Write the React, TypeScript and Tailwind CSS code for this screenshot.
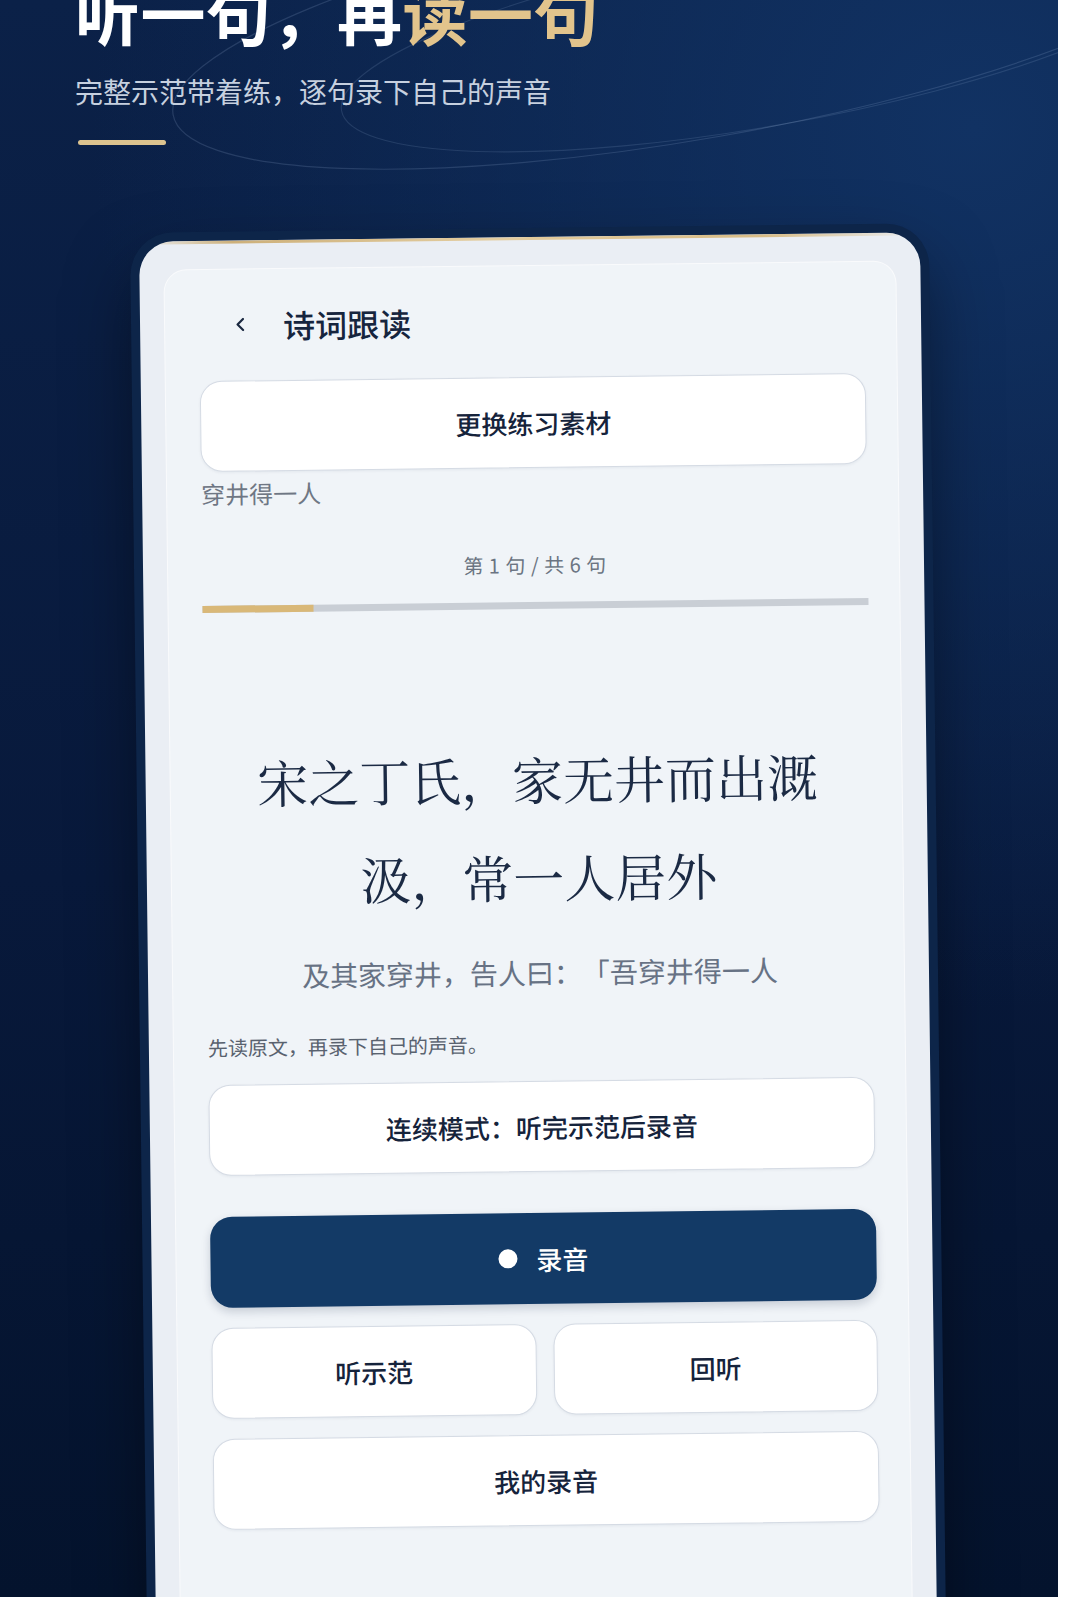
import React from 'react';
import clsx from 'clsx';

const sans = "font-['Noto_Sans_CJK_SC','Noto_Sans',sans-serif]";

const PanelButton: React.FC<{ children: React.ReactNode; className?: string }> = ({ children, className }) => (
  <button
    className={clsx(
      'flex h-[91px] w-full items-center justify-center rounded-[22px] border border-[#d5dbe4] bg-white text-[26px] font-medium text-[#15233b] shadow-[0_1px_3px_rgba(15,30,60,0.06)]',
      className,
    )}
  >
    {children}
  </button>
);

// decorative orbit lines behind the headline
const Orbits = () => (
  <svg className="pointer-events-none absolute inset-0" width="1058" height="300" viewBox="0 0 1058 300" fill="none">
    <ellipse cx="700" cy="22" rx="535" ry="116" transform="rotate(-10 700 22)" stroke="rgba(170,195,230,0.17)" strokeWidth="1.2" />
    <ellipse cx="765" cy="36" rx="430" ry="90" transform="rotate(-10 765 36)" stroke="rgba(170,195,230,0.15)" strokeWidth="1.1" />
  </svg>
);

export default function App() {
  return (
    <div className={clsx('min-h-screen bg-white', sans)}>
      <div className="relative mr-[11px] h-[1597px] overflow-hidden bg-[radial-gradient(circle_at_92%_8%,#113263_0%,transparent_50%),linear-gradient(180deg,#0b2148_0%,#08193b_55%,#04132d_100%)]">
        <Orbits />

        <header className="relative pl-[75px]">
          <h1 className="mt-[-20px] text-[65px] font-bold leading-none tracking-[0.5px] text-white">
            听一句，再<span className="text-[#e2c48c]">读一句</span>
          </h1>
          <p className="mt-[27px] text-[28px] leading-[39px] text-[#c6d0df]">完整示范带着练，逐句录下自己的声音</p>
          <div className="ml-[3px] mt-[29px] h-[5px] w-[88px] rounded-full bg-[#dcc38f]" />
        </header>

        <div className="relative mx-auto mt-[92px] h-[1420px] w-[781px] origin-top -rotate-[0.7deg] overflow-hidden rounded-[34px] bg-[#eaeef4] shadow-[0_0_0_9px_#0d2549,0_30px_70px_rgba(0,0,0,0.5)]">
          <div className="h-[3px] bg-[linear-gradient(90deg,transparent_0%,#cdb07a_12%,#e3cda0_45%,#d8bc86_80%,transparent_100%)]" />

          <div className="mx-[25px] mt-[26px] h-[1380px] rounded-[22px] bg-[#f0f4f8] pl-[34px] pr-[31px] pt-[35px] shadow-[0_0_0_1px_rgba(255,255,255,0.7)]">
            <div className="flex items-center gap-[38px] pl-[36px]">
              <svg width="10" height="14" viewBox="0 0 10 14" fill="none">
                <path d="M8 1.5 L2.5 7 L8 12.5" stroke="#1a2840" strokeWidth="2.2" strokeLinecap="round" strokeLinejoin="round" />
              </svg>
              <h2 className="text-[32px] font-medium leading-[40px] text-[#16253e]">诗词跟读</h2>
            </div>

            <PanelButton className="mt-[36px] h-[90px]">更换练习素材</PanelButton>
            <p className="mt-[6px] text-[24px] leading-[32px] text-[#6f7784]">穿井得一人</p>

            <p className="mt-[45px] text-center text-[20px] leading-[28px] tracking-[0.5px] text-[#6b7482]">第 1 句 / 共 6 句</p>
            <div className="mt-[23px] flex h-[7px] w-full bg-[#c9ced5]">
              <div className="h-full w-1/6 bg-[#d9b878]" />
            </div>

            <p className="mx-auto mt-[120px] max-w-[580px] text-center font-['Noto_Serif_CJK_SC','Source_Han_Serif_SC','Noto_Sans_CJK_SC',serif] text-[51px] font-normal leading-[98px] text-[#1b2a44] [text-spacing-trim:space-all]">
              宋之丁氏，家无井而出溉汲，常一人居外
            </p>
            <p className="mt-[27px] whitespace-nowrap text-center text-[28px] leading-[40px] text-[#677284] [text-spacing-trim:space-all]">
              及其家穿井，告人曰：「吾穿井得一人
            </p>

            <p className="mt-[38px] text-[20px] leading-[28px] text-[#59626f]">先读原文，再录下自己的声音。</p>

            <PanelButton className="mt-[23px]">连续模式：听完示范后录音</PanelButton>

            <button className="mt-[41px] flex h-[91px] w-full items-center justify-center gap-[19px] rounded-[22px] bg-[#133a66] text-[26px] font-medium text-white shadow-[0_4px_10px_rgba(10,30,60,0.18)]">
              <span className="h-[19px] w-[19px] rounded-full bg-white" />
              录音
            </button>

            <div className="mt-[20px] grid grid-cols-2 gap-[17px]">
              <PanelButton>听示范</PanelButton>
              <PanelButton>回听</PanelButton>
            </div>

            <PanelButton className="mt-[20px]">我的录音</PanelButton>
          </div>
        </div>
      </div>
    </div>
  );
}
